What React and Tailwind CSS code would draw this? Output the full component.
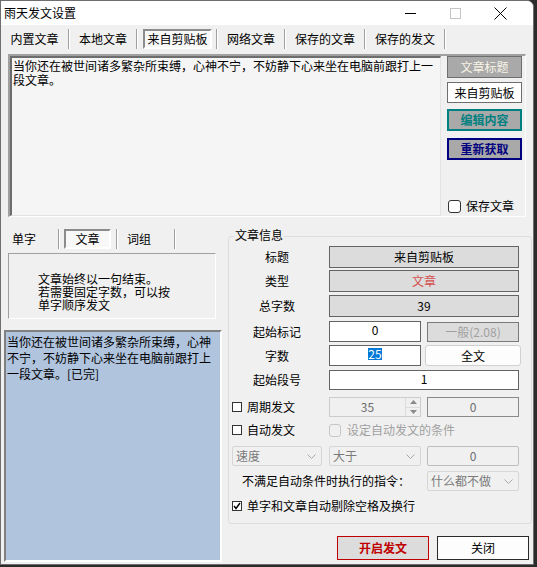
import React from "react";

const font = "font-['Noto_Sans_CJK_SC','Noto_Sans_CJK_JP',sans-serif]";

function Sep() {
  return <div className="w-[2px] h-full border-l border-r border-l-[#a0a0a0] border-r-white" />;
}

function Chevron() {
  return (
    <svg width="9" height="5" viewBox="0 0 9 5" className="mr-[5px]">
      <path d="M0.5 0.5L4.5 4.5L8.5 0.5" fill="none" stroke="#a8a8a8" strokeWidth="1" />
    </svg>
  );
}

function Combo({ label, w }) {
  return (
    <div className={`${w} h-full flex items-center justify-between border border-[#d6d6d6] bg-[#f0f0f0] rounded-[2px]`}>
      <span className="pl-[3px] text-[#7a7a7a]">{label}</span>
      <Chevron />
    </div>
  );
}

function Check({ checked }) {
  return (
    <div className="w-[10px] h-[10px] border border-[#333] bg-white flex items-center justify-center">
      {checked && (
        <svg width="8" height="8" viewBox="0 0 8 8">
          <path d="M1 4L3 6.5L7 1" fill="none" stroke="#000" strokeWidth="1.4" />
        </svg>
      )}
    </div>
  );
}

function Row({ label, children, className }) {
  return (
    <div className={`flex items-center ${className}`}>
      <div className="w-[96px] text-center">{label}</div>
      <div className="ml-[4px] flex h-full items-stretch">{children}</div>
    </div>
  );
}

export default function App() {
  return (
    <div className={`w-[537px] h-[567px] bg-[#2b2b2b] text-[12px] leading-[14px] text-black ${font}`}>
      <div className="w-[534px] h-[565px] bg-[#f0f0f0] border border-[#6e6e6e] rounded-tr-[7px] flex flex-col overflow-hidden">
        {/* title bar */}
        <div className="h-[24px] bg-white flex items-center shrink-0">
          <span className="pl-[3px]">雨天发文设置</span>
          <div className="ml-auto mr-[10px] flex h-full">
            <div className="w-[45px] flex items-center justify-center">
              <div className="w-[11px] h-px bg-black" />
            </div>
            <div className="w-[45px] flex items-center justify-center">
              <div className="w-[11px] h-[11px] border border-[#c4c4c4]" />
            </div>
            <div className="w-[45px] flex items-center justify-center">
              <svg width="13" height="13" viewBox="0 0 13 13">
                <path d="M0.5 0.5L12.5 12.5M12.5 0.5L0.5 12.5" stroke="#000" strokeWidth="1" />
              </svg>
            </div>
          </div>
        </div>

        {/* top tabs */}
        <div className="mt-[4px] h-[20px] flex items-stretch shrink-0">
          <div className="w-[67px] flex items-center justify-center">内置文章</div>
          <Sep />
          <div className="w-[66px] flex items-center justify-center">本地文章</div>
          <Sep />
          <div className="w-[78px] flex items-center">
            <div className="ml-[5px] w-[69px] h-full flex items-center justify-center border-2 border-t-[#8c8c8c] border-l-[#8c8c8c] border-r-white border-b-white bg-[#f8f8f8]">
              来自剪贴板
            </div>
          </div>
          <Sep />
          <div className="w-[66px] flex items-center justify-center">网络文章</div>
          <Sep />
          <div className="w-[78px] flex items-center justify-center">保存的文章</div>
          <Sep />
          <div className="w-[78px] flex items-center justify-center">保存的发文</div>
          <Sep />
        </div>

        {/* main text + right panel */}
        <div className="mt-[5px] ml-[7px] w-[518px] h-[163px] flex shrink-0 border-t-2 border-l-2 border-t-[#a0a0a0] border-l-[#a0a0a0] border-r border-b border-r-[#fdfdfd] border-b-[#fdfdfd]">
          <div className="w-[431px] bg-[#f5f5f5] border-t-2 border-l-2 border-t-[#6d6d6d] border-l-[#6d6d6d] border-r border-b border-r-[#e3e3e3] border-b-[#e3e3e3] pl-[1px] pt-[1px] leading-[14px]">
            当你还在被世间诸多繁杂所束缚，心神不宁，不妨静下心来坐在电脑前跟打上一段文章。
          </div>
          <div className="flex-1 flex flex-col pl-[6px]">
            <div className="w-[75px] h-[22px] bg-[#a9a9a9] border border-[#6e6e6e] flex items-center justify-center text-[#f8f3e6]">
              文章标题
            </div>
            <div className="mt-[4px] w-[75px] h-[21px] bg-white border border-[#6e6e6e] flex items-center justify-center">
              来自剪贴板
            </div>
            <div className="mt-[6px] w-[75px] h-[22px] bg-[#a9a9a9] border-2 border-[#008080] flex items-center justify-center text-[#008080] font-bold">
              编辑内容
            </div>
            <div className="mt-[7px] w-[75px] h-[22px] bg-[#a9a9a9] border-2 border-[#000080] flex items-center justify-center text-[#000080] font-bold">
              重新获取
            </div>
            <div className="mt-[39px] flex items-center">
              <div className="ml-px w-[13px] h-[13px] rounded-[3px] border border-[#333] bg-white" />
              <span className="ml-[5px]">保存文章</span>
            </div>
          </div>
        </div>

        {/* lower section */}
        <div className="flex items-start">
          {/* left column */}
          <div className="w-[221px] flex flex-col">
            <div className="mt-[12px] h-[20px] flex items-stretch">
              <div className="w-[57px] pl-[11px] flex items-center">单字</div>
              <Sep />
              <div className="w-[56px] flex items-center">
                <div className="ml-[4px] w-[47px] h-full flex items-center justify-center border-2 border-t-[#8c8c8c] border-l-[#8c8c8c] border-r-white border-b-white bg-[#f8f8f8]">
                  文章
                </div>
              </div>
              <Sep />
              <div className="w-[56px] pl-[9px] flex items-center">词组</div>
              <Sep />
            </div>
            <div className="mt-[4px] ml-[7px] w-[208px] h-[66px] border border-t-[#a0a0a0] border-l-[#a0a0a0] border-r-white border-b-white pl-[29px] pt-[18px] leading-[13px]">
              <div>文章始终以一句结束。</div>
              <div>若需要固定字数，可以按</div>
              <div>单字顺序发文</div>
            </div>
            <div className="mt-[11px] ml-[3px] w-[218px] h-[232px] bg-[#b0c4de] border-2 border-t-[#808080] border-l-[#808080] border-r-[#fdfdfd] border-b-[#fdfdfd] pl-[1px] pt-[2px] leading-[16px]">
              当你还在被世间诸多繁杂所束缚，心神不宁，不妨静下心来坐在电脑前跟打上一段文章。[已完]
            </div>
          </div>

          {/* right column */}
          <div className="ml-[6px] flex flex-col">
            <div className="relative mt-[19px] w-[304px] h-[288px] border border-[#dcdcdc] rounded-[3px] flex flex-col">
              <span className="absolute left-[5px] -top-[9px] px-px bg-[#f0f0f0]">文章信息</span>

              <Row label="标题" className="mt-[9px] h-[22px]">
                <div className="w-[190px] bg-[#dcdcdc] border border-[#646464] flex items-center justify-center">来自剪贴板</div>
              </Row>
              <Row label="类型" className="mt-[2px] h-[22px]">
                <div className="w-[190px] bg-[#dcdcdc] border border-[#646464] flex items-center justify-center text-[#d4504f]">文章</div>
              </Row>
              <Row label="总字数" className="mt-[3px] h-[22px]">
                <div className="w-[190px] bg-[#dcdcdc] border border-[#646464] flex items-center justify-center">39</div>
              </Row>
              <Row label="起始标记" className="mt-[4px] h-[21px]">
                <div className="w-[92px] bg-white border border-[#646464] flex justify-center pt-[1px]">0</div>
                <div className="ml-[6px] mt-px w-[92px] bg-[#dcdcdc] border border-[#7a7a7a] flex items-center justify-center text-[#a0a0a0]">
                  一般(2.08)
                </div>
              </Row>
              <Row label="字数" className="mt-[3px] h-[21px]">
                <div className="w-[92px] bg-white border border-[#646464] flex justify-center pt-[2px]">
                  <span className="h-[12px] leading-[12px] bg-[#0078d7] text-white">25</span>
                </div>
                <div className="ml-[4px] w-[96px] bg-[#fdfdfd] border border-[#d0d0d0] rounded-[3px] flex items-center justify-center">
                  全文
                </div>
              </Row>
              <Row label="起始段号" className="mt-[4px] h-[20px]">
                <div className="w-[190px] bg-white border border-[#646464] flex justify-center pt-[1px]">1</div>
              </Row>

              <div className="mt-[7px] h-[20px] flex items-stretch">
                <div className="w-[100px] pl-[3px] flex items-center">
                  <Check />
                  <span className="ml-[5px]">周期发文</span>
                </div>
                <div className="w-[92px] border border-[#cccccc] bg-[#f0f0f0] flex">
                  <div className="flex-1 flex items-center justify-center text-[#6d6d6d]">35</div>
                  <div className="w-[15px] flex flex-col border-l border-[#dcdcdc]">
                    <div className="flex-1 flex items-center justify-center border-b border-[#dcdcdc]">
                      <svg width="7" height="4" viewBox="0 0 7 4"><path d="M0 4L3.5 0L7 4Z" fill="#8a8a8a" /></svg>
                    </div>
                    <div className="flex-1 flex items-center justify-center">
                      <svg width="7" height="4" viewBox="0 0 7 4"><path d="M0 0L3.5 4L7 0Z" fill="#8a8a8a" /></svg>
                    </div>
                  </div>
                </div>
                <div className="ml-[6px] w-[92px] border border-[#8a8a8a] bg-[#f0f0f0] flex items-center justify-center text-[#6d6d6d]">0</div>
              </div>

              <div className="mt-[3px] h-[20px] flex items-center">
                <div className="w-[100px] pl-[3px] flex items-center">
                  <Check />
                  <span className="ml-[5px]">自动发文</span>
                </div>
                <div className="w-[12px] h-[13px] rounded-[3px] border border-[#c6c6c6]" />
                <span className="ml-[6px] text-[#a0a0a0]">设定自动发文的条件</span>
              </div>

              <div className="mt-[6px] h-[20px] flex items-stretch">
                <div className="ml-[3px]" />
                <Combo label="速度" w="w-[90px]" />
                <div className="ml-[7px]" />
                <Combo label="大于" w="w-[92px]" />
                <div className="ml-[6px] w-[92px] border border-[#bdbdbd] bg-[#f0f0f0] rounded-[2px] flex items-center justify-center text-[#6d6d6d]">0</div>
              </div>

              <div className="mt-[5px] h-[20px] flex items-stretch">
                <div className="w-[198px] pl-[13px] flex items-center">不满足自动条件时执行的指令：</div>
                <Combo label="什么都不做" w="w-[92px]" />
              </div>

              <div className="mt-[5px] h-[20px] flex items-center pl-[3px]">
                <Check checked />
                <span className="ml-[5px]">单字和文章自动剔除空格及换行</span>
              </div>
            </div>

            <div className="mt-[12px] flex">
              <div className="ml-[109px] w-[92px] h-[24px] bg-[#dcdcdc] border border-[#c00000] flex items-center justify-center text-[#c00000] font-bold">
                开启发文
              </div>
              <div className="ml-[8px] w-[92px] h-[24px] bg-[#fdfdfd] border border-[#2b2b2b] flex items-center justify-center">
                关闭
              </div>
            </div>
          </div>
        </div>
      </div>
    </div>
  );
}
